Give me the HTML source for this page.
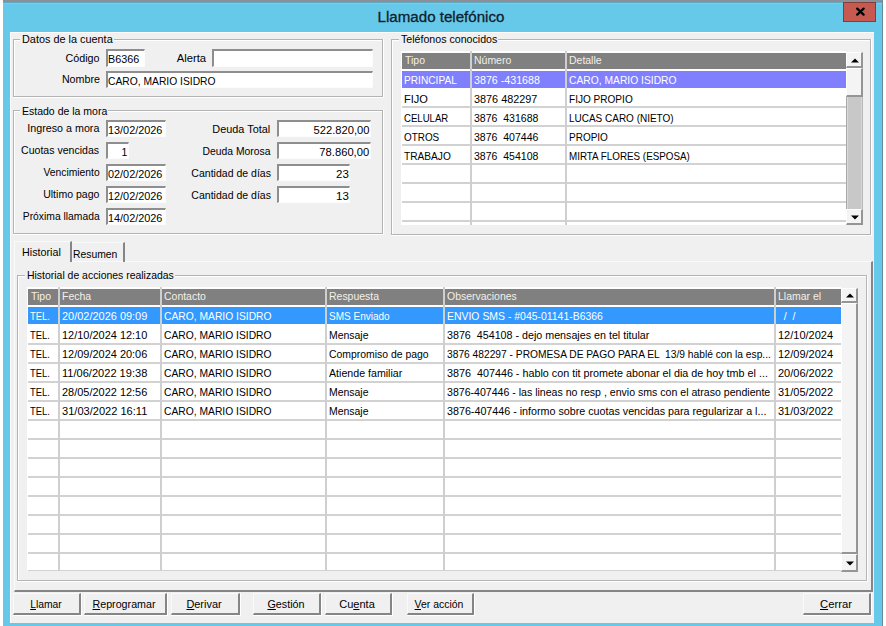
<!DOCTYPE html><html><head><meta charset="utf-8"><style>
html,body{margin:0;padding:0;width:886px;height:626px;overflow:hidden;background:#fff;}
body{position:relative;font-family:"Liberation Sans",sans-serif;font-size:11.5px;color:#000;}
div{position:absolute;}
.t{white-space:pre;line-height:13px;font-size:11.5px;transform-origin:0 0;}
u{text-underline-offset:1px;}
</style></head><body>
<div style="left:0px;top:0px;width:886px;height:626px;background:#fff"></div>
<div style="left:3px;top:0px;width:880px;height:626px;background:#66c9ea"></div>
<div style="left:3px;top:0px;width:880px;height:2px;background:#8c9096"></div>
<div style="left:3px;top:2px;width:880px;height:1px;background:#5fa9c2"></div>
<div style="left:3px;top:3px;width:880px;height:1px;background:#6dd2f2"></div>
<div style="left:882px;top:0px;width:1px;height:626px;background:#6a8a96"></div>
<div style="left:291px;width:300px;top:7px;text-align:center;font-size:15.5px;line-height:20px;color:#10202a;-webkit-text-stroke:0.3px #10202a;white-space:pre;transform:scaleX(0.975);transform-origin:50% 0">Llamado telefónico</div>
<div style="left:843px;top:2px;width:33px;height:20px;background:#c75a50;border:1px solid #8a3a34;box-sizing:border-box"></div>
<svg style="position:absolute;left:855px;top:7px" width="11" height="10" viewBox="0 0 11 10"><path d="M2.2 1.6L8.6 7.6M8.6 1.6L2.2 7.6" stroke="#000" stroke-width="2.3" stroke-linecap="round"/></svg>
<div style="left:10px;top:32px;width:864px;height:591px;background:#f0f0f0"></div>
<div style="left:10px;top:32px;width:1px;height:591px;background:#fff"></div>
<div style="left:10px;top:32px;width:864px;height:1px;background:#fff"></div>
<div style="left:13px;top:39px;width:370px;height:58px;border:1px solid #b4b4b4;box-sizing:border-box"></div>
<div style="left:14px;top:40px;width:368px;height:56px;border-left:1px solid #fff;border-top:1px solid #fff;box-sizing:border-box"></div>
<div style="left:383px;top:39px;width:1px;height:59px;background:#fff"></div>
<div style="left:13px;top:97px;width:371px;height:1px;background:#fff"></div>
<div style="left:20px;top:33px;width:93.8px;height:12px;background:#f0f0f0"></div>
<div class="t" style="left:22px;top:33px;transform:scaleX(0.9457);">Datos de la cuenta</div>
<div class="t" style="right:786.3px;top:51.5px;transform:scaleX(0.9327);transform-origin:100% 0;">Código</div>
<div style="left:106px;top:49px;width:39px;height:18px;background:#fff;border-top:2px solid #8e8e8e;border-left:2px solid #8e8e8e;border-right:1px solid #fcfcfc;border-bottom:1px solid #fcfcfc;box-sizing:border-box"></div>
<div class="t" style="left:108px;top:53px;transform:scaleX(0.9379);">B6366</div>
<div class="t" style="right:680.4px;top:51.5px;transform:scaleX(0.9785);transform-origin:100% 0;">Alerta</div>
<div style="left:212px;top:49px;width:161px;height:18px;background:#fff;border-top:2px solid #8e8e8e;border-left:2px solid #8e8e8e;border-right:1px solid #fcfcfc;border-bottom:1px solid #fcfcfc;box-sizing:border-box"></div>
<div class="t" style="right:786.3px;top:73px;transform:scaleX(0.929);transform-origin:100% 0;">Nombre</div>
<div style="left:106px;top:71px;width:267px;height:17px;background:#fff;border-top:2px solid #8e8e8e;border-left:2px solid #8e8e8e;border-right:1px solid #fcfcfc;border-bottom:1px solid #fcfcfc;box-sizing:border-box"></div>
<div class="t" style="left:108px;top:75px;transform:scaleX(0.8949);">CARO, MARIO ISIDRO</div>
<div style="left:13px;top:110px;width:370px;height:124px;border:1px solid #b4b4b4;box-sizing:border-box"></div>
<div style="left:14px;top:111px;width:368px;height:122px;border-left:1px solid #fff;border-top:1px solid #fff;box-sizing:border-box"></div>
<div style="left:383px;top:110px;width:1px;height:125px;background:#fff"></div>
<div style="left:13px;top:234px;width:371px;height:1px;background:#fff"></div>
<div style="left:20px;top:104px;width:88.4px;height:12px;background:#f0f0f0"></div>
<div class="t" style="left:22px;top:104.5px;transform:scaleX(0.9138);">Estado de la mora</div>
<div class="t" style="right:786.7px;top:122.30000000000001px;transform:scaleX(0.9307);transform-origin:100% 0;">Ingreso a mora</div>
<div style="left:106px;top:120px;width:60px;height:17px;background:#fff;border-top:2px solid #8e8e8e;border-left:2px solid #8e8e8e;border-right:1px solid #fcfcfc;border-bottom:1px solid #fcfcfc;box-sizing:border-box"></div>
<div class="t" style="left:108px;top:124px;transform:scaleX(0.9451);">13/02/2026</div>
<div class="t" style="right:786.7px;top:144.3px;transform:scaleX(0.9173);transform-origin:100% 0;">Cuotas vencidas</div>
<div style="left:106px;top:142px;width:23px;height:17px;background:#fff;border-top:2px solid #8e8e8e;border-left:2px solid #8e8e8e;border-right:1px solid #fcfcfc;border-bottom:1px solid #fcfcfc;box-sizing:border-box"></div>
<div class="t" style="right:758.5px;top:146px;transform:scaleX(0.91);transform-origin:100% 0;">1</div>
<div class="t" style="right:786.7px;top:166.3px;transform:scaleX(0.897);transform-origin:100% 0;">Vencimiento</div>
<div style="left:106px;top:164px;width:60px;height:17px;background:#fff;border-top:2px solid #8e8e8e;border-left:2px solid #8e8e8e;border-right:1px solid #fcfcfc;border-bottom:1px solid #fcfcfc;box-sizing:border-box"></div>
<div class="t" style="left:108px;top:168px;transform:scaleX(0.9451);">02/02/2026</div>
<div class="t" style="right:786.7px;top:188.3px;transform:scaleX(0.9157);transform-origin:100% 0;">Ultimo pago</div>
<div style="left:106px;top:186px;width:60px;height:17px;background:#fff;border-top:2px solid #8e8e8e;border-left:2px solid #8e8e8e;border-right:1px solid #fcfcfc;border-bottom:1px solid #fcfcfc;box-sizing:border-box"></div>
<div class="t" style="left:108px;top:190px;transform:scaleX(0.9451);">12/02/2026</div>
<div class="t" style="right:786.7px;top:210.3px;transform:scaleX(0.8978);transform-origin:100% 0;">Próxima llamada</div>
<div style="left:106px;top:208px;width:60px;height:17px;background:#fff;border-top:2px solid #8e8e8e;border-left:2px solid #8e8e8e;border-right:1px solid #fcfcfc;border-bottom:1px solid #fcfcfc;box-sizing:border-box"></div>
<div class="t" style="left:108px;top:212px;transform:scaleX(0.9451);">14/02/2026</div>
<div class="t" style="right:615.4px;top:122.5px;transform:scaleX(0.9449);transform-origin:100% 0;">Deuda Total</div>
<div style="left:277px;top:120px;width:94px;height:17px;background:#fff;border-top:2px solid #8e8e8e;border-left:2px solid #8e8e8e;border-right:1px solid #fcfcfc;border-bottom:1px solid #fcfcfc;box-sizing:border-box"></div>
<div class="t" style="right:516.5px;top:124px;transform:scaleX(0.9729);transform-origin:100% 0;">522.820,00</div>
<div class="t" style="right:615.4px;top:144.5px;transform:scaleX(0.9001);transform-origin:100% 0;">Deuda Morosa</div>
<div style="left:277px;top:142px;width:94px;height:17px;background:#fff;border-top:2px solid #8e8e8e;border-left:2px solid #8e8e8e;border-right:1px solid #fcfcfc;border-bottom:1px solid #fcfcfc;box-sizing:border-box"></div>
<div class="t" style="right:516.5px;top:146px;transform:scaleX(0.9732);transform-origin:100% 0;">78.860,00</div>
<div class="t" style="right:615.4px;top:166.5px;transform:scaleX(0.9154);transform-origin:100% 0;">Cantidad de días</div>
<div style="left:277px;top:164px;width:73px;height:17px;background:#fff;border-top:2px solid #8e8e8e;border-left:2px solid #8e8e8e;border-right:1px solid #fcfcfc;border-bottom:1px solid #fcfcfc;box-sizing:border-box"></div>
<div class="t" style="right:537.5px;top:168px;transform:scaleX(1.0002);transform-origin:100% 0;">23</div>
<div class="t" style="right:615.4px;top:188.5px;transform:scaleX(0.9154);transform-origin:100% 0;">Cantidad de días</div>
<div style="left:277px;top:186px;width:73px;height:17px;background:#fff;border-top:2px solid #8e8e8e;border-left:2px solid #8e8e8e;border-right:1px solid #fcfcfc;border-bottom:1px solid #fcfcfc;box-sizing:border-box"></div>
<div class="t" style="right:537.5px;top:190px;transform:scaleX(1.0002);transform-origin:100% 0;">13</div>
<div style="left:391px;top:39px;width:480px;height:196px;border:1px solid #b4b4b4;box-sizing:border-box"></div>
<div style="left:392px;top:40px;width:478px;height:194px;border-left:1px solid #fff;border-top:1px solid #fff;box-sizing:border-box"></div>
<div style="left:871px;top:39px;width:1px;height:197px;background:#fff"></div>
<div style="left:391px;top:235px;width:481px;height:1px;background:#fff"></div>
<div style="left:399px;top:33px;width:99.4px;height:12px;background:#f0f0f0"></div>
<div class="t" style="left:401px;top:33px;transform:scaleX(0.924);">Teléfonos conocidos</div>
<div style="left:402px;top:53px;width:444px;height:172px;background:#fff"></div>
<div style="left:401px;top:51px;width:445px;height:2px;background:#fff"></div>
<div style="left:401px;top:51px;width:1px;height:174px;background:#fff"></div>
<div style="left:402px;top:53px;width:444px;height:16px;background:#808080"></div>
<div style="left:402px;top:71px;width:444px;height:17px;background:#8080ff"></div>
<div style="left:402px;top:106px;width:444px;height:2px;background:#d2d2d2"></div>
<div style="left:402px;top:125px;width:444px;height:2px;background:#d2d2d2"></div>
<div style="left:402px;top:144px;width:444px;height:2px;background:#d2d2d2"></div>
<div style="left:402px;top:163px;width:444px;height:2px;background:#d2d2d2"></div>
<div style="left:402px;top:182px;width:444px;height:2px;background:#d2d2d2"></div>
<div style="left:402px;top:201px;width:444px;height:2px;background:#d2d2d2"></div>
<div style="left:402px;top:220px;width:444px;height:2px;background:#d2d2d2"></div>
<div style="left:470px;top:51px;width:2px;height:174px;background:#cfcfcf"></div>
<div style="left:565px;top:51px;width:2px;height:174px;background:#cfcfcf"></div>
<div class="t" style="left:405px;top:54px;transform:scaleX(0.91);color:#f4f0e8">Tipo</div>
<div class="t" style="left:474px;top:54px;transform:scaleX(0.91);color:#f4f0e8">Número</div>
<div class="t" style="left:569px;top:54px;transform:scaleX(0.91);color:#f4f0e8">Detalle</div>
<div style="left:404px;top:73px;width:66px;height:15px;overflow:hidden"><div class="t" style="left:-0.5px;top:1px;transform:scaleX(0.8837);color:#fff">PRINCIPAL</div></div>
<div style="left:473px;top:73px;width:92px;height:15px;overflow:hidden"><div class="t" style="left:1px;top:1px;transform:scaleX(0.9284);color:#fff">3876 -431688</div></div>
<div style="left:568px;top:73px;width:277px;height:15px;overflow:hidden"><div class="t" style="left:1px;top:1px;transform:scaleX(0.8949);color:#fff">CARO, MARIO ISIDRO</div></div>
<div style="left:404px;top:92px;width:66px;height:15px;overflow:hidden"><div class="t" style="left:-0.5px;top:1px;transform:scaleX(0.959);color:#000">FIJO</div></div>
<div style="left:473px;top:92px;width:92px;height:15px;overflow:hidden"><div class="t" style="left:1px;top:1px;transform:scaleX(0.9426);color:#000">3876 482297</div></div>
<div style="left:568px;top:92px;width:277px;height:15px;overflow:hidden"><div class="t" style="left:1px;top:1px;transform:scaleX(0.8745);color:#000">FIJO PROPIO</div></div>
<div style="left:404px;top:111px;width:66px;height:15px;overflow:hidden"><div class="t" style="left:-0.5px;top:1px;transform:scaleX(0.833);color:#000">CELULAR</div></div>
<div style="left:473px;top:111px;width:92px;height:15px;overflow:hidden"><div class="t" style="left:1px;top:1px;transform:scaleX(0.9153);color:#000">3876  431688</div></div>
<div style="left:568px;top:111px;width:277px;height:15px;overflow:hidden"><div class="t" style="left:1px;top:1px;transform:scaleX(0.8676);color:#000">LUCAS CARO (NIETO)</div></div>
<div style="left:404px;top:130px;width:66px;height:15px;overflow:hidden"><div class="t" style="left:-0.5px;top:1px;transform:scaleX(0.8608);color:#000">OTROS</div></div>
<div style="left:473px;top:130px;width:92px;height:15px;overflow:hidden"><div class="t" style="left:1px;top:1px;transform:scaleX(0.9153);color:#000">3876  407446</div></div>
<div style="left:568px;top:130px;width:277px;height:15px;overflow:hidden"><div class="t" style="left:1px;top:1px;transform:scaleX(0.8696);color:#000">PROPIO</div></div>
<div style="left:404px;top:149px;width:66px;height:15px;overflow:hidden"><div class="t" style="left:-0.5px;top:1px;transform:scaleX(0.8822);color:#000">TRABAJO</div></div>
<div style="left:473px;top:149px;width:92px;height:15px;overflow:hidden"><div class="t" style="left:1px;top:1px;transform:scaleX(0.9153);color:#000">3876  454108</div></div>
<div style="left:568px;top:149px;width:277px;height:15px;overflow:hidden"><div class="t" style="left:1px;top:1px;transform:scaleX(0.8541);color:#000">MIRTA FLORES (ESPOSA)</div></div>
<div style="left:846px;top:52px;width:17px;height:173px;background:#c8c8c8;border-left:1px solid #a8a8a8;border-right:1px solid #b8b8b8;box-sizing:border-box"></div>
<div style="left:847px;top:52px;width:1px;height:173px;background:#dadada"></div>
<div style="left:861px;top:52px;width:1px;height:173px;background:#d8d8d8"></div>
<div style="left:846px;top:52px;width:17px;height:16px;background:#f4f4f4;border-top:1px solid #fff;border-left:1px solid #fff;border-right:2px solid #959595;border-bottom:2px solid #959595;box-sizing:border-box"></div>
<svg style="position:absolute;left:850.5px;top:57.5px" width="8" height="5"><path d="M0 4.5L4 0.5L8 4.5Z" fill="#000"/></svg>
<div style="left:846px;top:68px;width:17px;height:29px;background:#f4f4f4;border-top:1px solid #fff;border-left:1px solid #fff;border-right:2px solid #959595;border-bottom:2px solid #959595;box-sizing:border-box"></div>
<div style="left:846px;top:209px;width:17px;height:16px;background:#f4f4f4;border-top:1px solid #fff;border-left:1px solid #fff;border-right:2px solid #959595;border-bottom:2px solid #959595;box-sizing:border-box"></div>
<svg style="position:absolute;left:850.5px;top:214.5px" width="8" height="5"><path d="M0 0.5L4 4.5L8 0.5Z" fill="#000"/></svg>
<div style="left:14px;top:261px;width:859px;height:331px;border-top:1px solid #fafafa;border-left:1px solid #fafafa;border-right:2px solid #858585;border-bottom:2px solid #858585;box-sizing:border-box"></div>
<div style="left:14px;top:241px;width:58px;height:21px;background:#f0f0f0;border-top:1px solid #fafafa;border-left:1px solid #fafafa;border-right:2px solid #858585;box-sizing:border-box"></div>
<div class="t" style="left:22px;top:246px;transform:scaleX(0.9339);">Historial</div>
<div style="left:72px;top:242px;width:53px;height:20px;border-top:1px solid #f8f8f8;border-right:2px solid #858585;box-sizing:border-box"></div>
<div class="t" style="left:72.5px;top:248.3px;transform:scaleX(0.9001);">Resumen</div>
<div style="left:17px;top:275px;width:850px;height:306px;border:1px solid #b4b4b4;box-sizing:border-box"></div>
<div style="left:18px;top:276px;width:848px;height:304px;border-left:1px solid #fff;border-top:1px solid #fff;box-sizing:border-box"></div>
<div style="left:867px;top:275px;width:1px;height:307px;background:#fff"></div>
<div style="left:17px;top:581px;width:851px;height:1px;background:#fff"></div>
<div style="left:25px;top:269px;width:149.9px;height:12px;background:#f0f0f0"></div>
<div class="t" style="left:27px;top:269px;transform:scaleX(0.9077);">Historial de acciones realizadas</div>
<div style="left:28px;top:289px;width:813px;height:282px;background:#fff"></div>
<div style="left:27px;top:287px;width:814px;height:2px;background:#fff"></div>
<div style="left:27px;top:287px;width:1px;height:284px;background:#fff"></div>
<div style="left:28px;top:289px;width:813px;height:16px;background:#808080"></div>
<div style="left:28px;top:307px;width:813px;height:17px;background:#3399ff"></div>
<div style="left:28px;top:343px;width:813px;height:2px;background:#d2d2d2"></div>
<div style="left:28px;top:362px;width:813px;height:2px;background:#d2d2d2"></div>
<div style="left:28px;top:381px;width:813px;height:2px;background:#d2d2d2"></div>
<div style="left:28px;top:400px;width:813px;height:2px;background:#d2d2d2"></div>
<div style="left:28px;top:419px;width:813px;height:2px;background:#d2d2d2"></div>
<div style="left:28px;top:438px;width:813px;height:2px;background:#d2d2d2"></div>
<div style="left:28px;top:457px;width:813px;height:2px;background:#d2d2d2"></div>
<div style="left:28px;top:476px;width:813px;height:2px;background:#d2d2d2"></div>
<div style="left:28px;top:495px;width:813px;height:2px;background:#d2d2d2"></div>
<div style="left:28px;top:514px;width:813px;height:2px;background:#d2d2d2"></div>
<div style="left:28px;top:533px;width:813px;height:2px;background:#d2d2d2"></div>
<div style="left:28px;top:552px;width:813px;height:2px;background:#d2d2d2"></div>
<div style="left:28px;top:570px;width:813px;height:1px;background:#d2d2d2"></div>
<div style="left:58px;top:287px;width:2px;height:284px;background:#cfcfcf"></div>
<div style="left:160px;top:287px;width:2px;height:284px;background:#cfcfcf"></div>
<div style="left:325px;top:287px;width:2px;height:284px;background:#cfcfcf"></div>
<div style="left:443px;top:287px;width:2px;height:284px;background:#cfcfcf"></div>
<div style="left:774px;top:287px;width:2px;height:284px;background:#cfcfcf"></div>
<div class="t" style="left:31px;top:289.8px;transform:scaleX(0.91);color:#f4f0e8">Tipo</div>
<div class="t" style="left:62px;top:289.8px;transform:scaleX(0.91);color:#f4f0e8">Fecha</div>
<div class="t" style="left:164px;top:289.8px;transform:scaleX(0.91);color:#f4f0e8">Contacto</div>
<div class="t" style="left:329px;top:289.8px;transform:scaleX(0.91);color:#f4f0e8">Respuesta</div>
<div class="t" style="left:447px;top:289.8px;transform:scaleX(0.91);color:#f4f0e8">Observaciones</div>
<div class="t" style="left:778px;top:289.8px;transform:scaleX(0.91);color:#f4f0e8">Llamar el</div>
<div style="left:30px;top:308.8px;width:28px;height:15px;overflow:hidden"><div class="t" style="left:-0.5px;top:1px;transform:scaleX(0.819);color:#fff">TEL.</div></div>
<div style="left:61px;top:308.8px;width:99px;height:15px;overflow:hidden"><div class="t" style="left:1px;top:1px;transform:scaleX(0.9527);color:#fff">20/02/2026 09:09</div></div>
<div style="left:163px;top:308.8px;width:162px;height:15px;overflow:hidden"><div class="t" style="left:1px;top:1px;transform:scaleX(0.8949);color:#fff">CARO, MARIO ISIDRO</div></div>
<div style="left:328px;top:308.8px;width:115px;height:15px;overflow:hidden"><div class="t" style="left:1px;top:1px;transform:scaleX(0.871);color:#fff">SMS Enviado</div></div>
<div style="left:446px;top:308.8px;width:328px;height:15px;overflow:hidden"><div class="t" style="left:1px;top:1px;transform:scaleX(0.9077);color:#fff">ENVIO SMS - #045-01141-B6366</div></div>
<div style="left:777px;top:308.8px;width:63px;height:15px;overflow:hidden"><div class="t" style="left:1px;top:1px;transform:scaleX(0.91);color:#fff">  /  /</div></div>
<div style="left:30px;top:327.8px;width:28px;height:15px;overflow:hidden"><div class="t" style="left:-0.5px;top:1px;transform:scaleX(0.819);color:#000">TEL.</div></div>
<div style="left:61px;top:327.8px;width:99px;height:15px;overflow:hidden"><div class="t" style="left:1px;top:1px;transform:scaleX(0.9527);color:#000">12/10/2024 12:10</div></div>
<div style="left:163px;top:327.8px;width:162px;height:15px;overflow:hidden"><div class="t" style="left:1px;top:1px;transform:scaleX(0.8949);color:#000">CARO, MARIO ISIDRO</div></div>
<div style="left:328px;top:327.8px;width:115px;height:15px;overflow:hidden"><div class="t" style="left:1px;top:1px;transform:scaleX(0.9087);color:#000">Mensaje</div></div>
<div style="left:446px;top:327.8px;width:328px;height:15px;overflow:hidden"><div class="t" style="left:1px;top:1px;transform:scaleX(0.9311);color:#000">3876  454108 - dejo mensajes en tel titular</div></div>
<div style="left:777px;top:327.8px;width:63px;height:15px;overflow:hidden"><div class="t" style="left:1px;top:1px;transform:scaleX(0.9572);color:#000">12/10/2024</div></div>
<div style="left:30px;top:346.8px;width:28px;height:15px;overflow:hidden"><div class="t" style="left:-0.5px;top:1px;transform:scaleX(0.819);color:#000">TEL.</div></div>
<div style="left:61px;top:346.8px;width:99px;height:15px;overflow:hidden"><div class="t" style="left:1px;top:1px;transform:scaleX(0.9527);color:#000">12/09/2024 20:06</div></div>
<div style="left:163px;top:346.8px;width:162px;height:15px;overflow:hidden"><div class="t" style="left:1px;top:1px;transform:scaleX(0.8949);color:#000">CARO, MARIO ISIDRO</div></div>
<div style="left:328px;top:346.8px;width:115px;height:15px;overflow:hidden"><div class="t" style="left:1px;top:1px;transform:scaleX(0.9058);color:#000">Compromiso de pago</div></div>
<div style="left:446px;top:346.8px;width:328px;height:15px;overflow:hidden"><div class="t" style="left:1px;top:1px;transform:scaleX(0.8894);color:#000">3876 482297 - PROMESA DE PAGO PARA EL  13/9 hablé con la esp...</div></div>
<div style="left:777px;top:346.8px;width:63px;height:15px;overflow:hidden"><div class="t" style="left:1px;top:1px;transform:scaleX(0.9572);color:#000">12/09/2024</div></div>
<div style="left:30px;top:365.8px;width:28px;height:15px;overflow:hidden"><div class="t" style="left:-0.5px;top:1px;transform:scaleX(0.819);color:#000">TEL.</div></div>
<div style="left:61px;top:365.8px;width:99px;height:15px;overflow:hidden"><div class="t" style="left:1px;top:1px;transform:scaleX(0.9618);color:#000">11/06/2022 19:38</div></div>
<div style="left:163px;top:365.8px;width:162px;height:15px;overflow:hidden"><div class="t" style="left:1px;top:1px;transform:scaleX(0.8949);color:#000">CARO, MARIO ISIDRO</div></div>
<div style="left:328px;top:365.8px;width:115px;height:15px;overflow:hidden"><div class="t" style="left:1px;top:1px;transform:scaleX(0.9247);color:#000">Atiende familiar</div></div>
<div style="left:446px;top:365.8px;width:328px;height:15px;overflow:hidden"><div class="t" style="left:1px;top:1px;transform:scaleX(0.9365);color:#000">3876  407446 - hablo con tit promete abonar el dia de hoy tmb el ...</div></div>
<div style="left:777px;top:365.8px;width:63px;height:15px;overflow:hidden"><div class="t" style="left:1px;top:1px;transform:scaleX(0.9572);color:#000">20/06/2022</div></div>
<div style="left:30px;top:384.8px;width:28px;height:15px;overflow:hidden"><div class="t" style="left:-0.5px;top:1px;transform:scaleX(0.819);color:#000">TEL.</div></div>
<div style="left:61px;top:384.8px;width:99px;height:15px;overflow:hidden"><div class="t" style="left:1px;top:1px;transform:scaleX(0.9527);color:#000">28/05/2022 12:56</div></div>
<div style="left:163px;top:384.8px;width:162px;height:15px;overflow:hidden"><div class="t" style="left:1px;top:1px;transform:scaleX(0.8949);color:#000">CARO, MARIO ISIDRO</div></div>
<div style="left:328px;top:384.8px;width:115px;height:15px;overflow:hidden"><div class="t" style="left:1px;top:1px;transform:scaleX(0.9087);color:#000">Mensaje</div></div>
<div style="left:446px;top:384.8px;width:328px;height:15px;overflow:hidden"><div class="t" style="left:1px;top:1px;transform:scaleX(0.9192);color:#000">3876-407446 - las lineas no resp , envio sms con el atraso pendiente</div></div>
<div style="left:777px;top:384.8px;width:63px;height:15px;overflow:hidden"><div class="t" style="left:1px;top:1px;transform:scaleX(0.9572);color:#000">31/05/2022</div></div>
<div style="left:30px;top:403.8px;width:28px;height:15px;overflow:hidden"><div class="t" style="left:-0.5px;top:1px;transform:scaleX(0.819);color:#000">TEL.</div></div>
<div style="left:61px;top:403.8px;width:99px;height:15px;overflow:hidden"><div class="t" style="left:1px;top:1px;transform:scaleX(0.9618);color:#000">31/03/2022 16:11</div></div>
<div style="left:163px;top:403.8px;width:162px;height:15px;overflow:hidden"><div class="t" style="left:1px;top:1px;transform:scaleX(0.8949);color:#000">CARO, MARIO ISIDRO</div></div>
<div style="left:328px;top:403.8px;width:115px;height:15px;overflow:hidden"><div class="t" style="left:1px;top:1px;transform:scaleX(0.9087);color:#000">Mensaje</div></div>
<div style="left:446px;top:403.8px;width:328px;height:15px;overflow:hidden"><div class="t" style="left:1px;top:1px;transform:scaleX(0.9322);color:#000">3876-407446 - informo sobre cuotas vencidas para regularizar a l...</div></div>
<div style="left:777px;top:403.8px;width:63px;height:15px;overflow:hidden"><div class="t" style="left:1px;top:1px;transform:scaleX(0.9572);color:#000">31/03/2022</div></div>
<div style="left:841px;top:288px;width:17px;height:284px;background:#f0f0f0;border-left:1px solid #a8a8a8;border-right:1px solid #b8b8b8;box-sizing:border-box"></div>
<div style="left:842px;top:288px;width:1px;height:284px;background:#dadada"></div>
<div style="left:856px;top:288px;width:1px;height:284px;background:#d8d8d8"></div>
<div style="left:841px;top:288px;width:17px;height:15px;background:#f4f4f4;border-top:1px solid #fff;border-left:1px solid #fff;border-right:2px solid #959595;border-bottom:2px solid #959595;box-sizing:border-box"></div>
<svg style="position:absolute;left:845.5px;top:293.0px" width="8" height="5"><path d="M0 4.5L4 0.5L8 4.5Z" fill="#000"/></svg>
<div style="left:841px;top:303px;width:17px;height:251px;background:#f4f4f4;border-top:1px solid #fff;border-left:1px solid #fff;border-right:2px solid #959595;border-bottom:2px solid #959595;box-sizing:border-box"></div>
<div style="left:841px;top:554px;width:17px;height:18px;background:#f4f4f4;border-top:1px solid #fff;border-left:1px solid #fff;border-right:2px solid #959595;border-bottom:2px solid #959595;box-sizing:border-box"></div>
<svg style="position:absolute;left:845.5px;top:560.5px" width="8" height="5"><path d="M0 0.5L4 4.5L8 0.5Z" fill="#000"/></svg>
<div style="left:13px;top:593px;width:69px;height:23px;background:#fff"></div>
<div style="left:13px;top:593px;width:68px;height:22px;background:#f0f0f0;border-top:1px solid #fafafa;border-left:1px solid #fafafa;border-right:2px solid #858585;border-bottom:2px solid #858585;box-sizing:border-box"></div>
<div class="t" style="left:-104.5px;width:300px;top:598.3px;text-align:center;transform:scaleX(0.8984);transform-origin:50% 0;"><u>L</u>lamar</div>
<div style="left:84px;top:593px;width:84px;height:23px;background:#fff"></div>
<div style="left:84px;top:593px;width:83px;height:22px;background:#f0f0f0;border-top:1px solid #fafafa;border-left:1px solid #fafafa;border-right:2px solid #858585;border-bottom:2px solid #858585;box-sizing:border-box"></div>
<div class="t" style="left:-26.0px;width:300px;top:598.3px;text-align:center;transform:scaleX(0.9297);transform-origin:50% 0;"><u>R</u>eprogramar</div>
<div style="left:171px;top:593px;width:70px;height:23px;background:#fff"></div>
<div style="left:171px;top:593px;width:69px;height:22px;background:#f0f0f0;border-top:1px solid #fafafa;border-left:1px solid #fafafa;border-right:2px solid #858585;border-bottom:2px solid #858585;box-sizing:border-box"></div>
<div class="t" style="left:54.0px;width:300px;top:598.3px;text-align:center;transform:scaleX(0.9493);transform-origin:50% 0;"><u>D</u>erivar</div>
<div style="left:253px;top:593px;width:69px;height:23px;background:#fff"></div>
<div style="left:253px;top:593px;width:68px;height:22px;background:#f0f0f0;border-top:1px solid #fafafa;border-left:1px solid #fafafa;border-right:2px solid #858585;border-bottom:2px solid #858585;box-sizing:border-box"></div>
<div class="t" style="left:135.5px;width:300px;top:598.3px;text-align:center;transform:scaleX(0.9359);transform-origin:50% 0;"><u>G</u>estión</div>
<div style="left:325px;top:593px;width:68px;height:23px;background:#fff"></div>
<div style="left:325px;top:593px;width:67px;height:22px;background:#f0f0f0;border-top:1px solid #fafafa;border-left:1px solid #fafafa;border-right:2px solid #858585;border-bottom:2px solid #858585;box-sizing:border-box"></div>
<div class="t" style="left:207.0px;width:300px;top:598.3px;text-align:center;transform:scaleX(0.9593);transform-origin:50% 0;">Cu<u>e</u>nta</div>
<div style="left:407px;top:593px;width:68px;height:23px;background:#fff"></div>
<div style="left:407px;top:593px;width:67px;height:22px;background:#f0f0f0;border-top:1px solid #fafafa;border-left:1px solid #fafafa;border-right:2px solid #858585;border-bottom:2px solid #858585;box-sizing:border-box"></div>
<div class="t" style="left:289.0px;width:300px;top:598.3px;text-align:center;transform:scaleX(0.9084);transform-origin:50% 0;"><u>V</u>er acción</div>
<div style="left:803px;top:593px;width:69px;height:23px;background:#fff"></div>
<div style="left:803px;top:593px;width:68px;height:22px;background:#f0f0f0;border-top:1px solid #fafafa;border-left:1px solid #fafafa;border-right:2px solid #858585;border-bottom:2px solid #858585;box-sizing:border-box"></div>
<div class="t" style="left:685.5px;width:300px;top:598.3px;text-align:center;transform:scaleX(0.9787);transform-origin:50% 0;"><u>C</u>errar</div>
</body></html>
